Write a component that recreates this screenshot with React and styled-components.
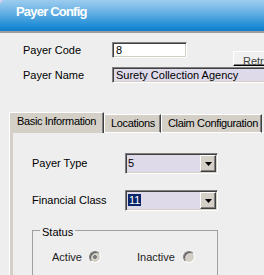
import React from "react";
import styled, { createGlobalStyle } from "styled-components";

const GlobalStyle = createGlobalStyle`
  html, body {
    margin: 0;
    padding: 0;
    background: #eeeeee;
    overflow: hidden;
  }
  body {
    font-family: "Liberation Sans", Arial, sans-serif;
    font-size: 11px;
    color: #000;
  }
`;

const Window = styled.div`
  width: 264px;
  height: 275px;
  overflow: hidden;
  background: #eeeeee;
`;

const TitleFrame = styled.div`
  background: #d6d0f0;
`;

const TitleBar = styled.div`
  box-sizing: border-box;
  height: 33px;
  padding: 4px 0 0 16px;
  border-top-left-radius: 5px;
  border-bottom: 2px solid #9c9c9c;
  background: linear-gradient(
    to bottom,
    #9dcdef 0%,
    #74b8e7 30%,
    #45a0dd 60%,
    #1f8bd4 85%,
    #0f7dcb 100%
  );
`;

const Title = styled.div`
  color: #fff;
  font-weight: bold;
  font-size: 13px;
  line-height: 16px;
  letter-spacing: -0.8px;
`;

const HeaderForm = styled.div`
  display: grid;
  grid-template-columns: 89px 75px 1fr;
  grid-template-rows: 16px 16px;
  row-gap: 9px;
  padding: 9px 0 0 23px;
`;

const Label = styled.div`
  line-height: ${(p) => p.$lh || 16}px;
  white-space: nowrap;
`;

const TextInput = styled.div`
  box-sizing: border-box;
  height: 16px;
  width: ${(p) => p.$w}px;
  padding: 0 3px;
  line-height: 14px;
  white-space: nowrap;
  overflow: hidden;
  background: ${(p) => (p.$lilac ? "#dedaea" : "#ffffff")};
  border: 1px solid;
  border-color: #808080 #ffffff #ffffff #808080;
  box-shadow: inset 1px 1px #404040, inset -1px -1px #d4d0c8;
`;

const WideInput = styled(TextInput)`
  grid-column: 2 / span 2;
`;

const RetrieveButton = styled.div`
  box-sizing: border-box;
  margin: 9px 0 0 46px;
  width: 70px;
  height: 15px;
  padding: 3px 0 0 9px;
  line-height: 13px;
  overflow: hidden;
  white-space: nowrap;
  color: #404040;
  background: #f0f0f0;
  border: 1px solid;
  border-color: #ffffff #404040 #000000 #ffffff;
  box-shadow: inset 0 -1px #808080;
`;

const Tabs = styled.div`
  margin: 29px 0 0 9px;
`;

const TabStrip = styled.div`
  display: flex;
  align-items: flex-end;
  height: 21px;
`;

const Tab = styled.div`
  box-sizing: border-box;
  width: ${(p) => p.$w}px;
  height: ${(p) => (p.$active ? 21 : 19)}px;
  padding-left: ${(p) => (p.$active ? 7 : 6)}px;
  line-height: 16px;
  letter-spacing: -0.35px;
  white-space: nowrap;
  overflow: hidden;
  background: #d4d0c8;
  border-top: 1px solid #ffffff;
  border-left: 1px solid #ffffff;
  border-right: 1px solid #404040;
  border-bottom: ${(p) => (p.$active ? "none" : "1px solid #ffffff")};
  box-shadow: inset -1px 0 #808080;
`;

const StripRest = styled.div`
  flex: 1;
  height: 0;
  border-bottom: 1px solid #ffffff;
`;

const Panel = styled.div`
  height: 142px;
  padding: 20px 0 0 22px;
  box-sizing: border-box;
  border-left: 1px solid #ffffff;
  box-shadow: inset 3px 0 #d4d0c8;
`;

const FieldGrid = styled.div`
  display: grid;
  grid-template-columns: 93px 93px;
  grid-template-rows: 21px 21px;
  row-gap: 16px;
`;

const Select = styled.div`
  box-sizing: border-box;
  display: flex;
  align-items: stretch;
  height: 21px;
  background: #dedaea;
  border: 1px solid;
  border-color: #808080 #ffffff #ffffff #808080;
  box-shadow: inset 1px 1px #404040, inset -1px -1px #d4d0c8;
`;

const SelectValue = styled.div`
  flex: 1;
  padding: 1px 0 0 2px;
  line-height: 16px;
`;

const Highlight = styled.span`
  background: #0a246a;
  color: #ffffff;
  padding: 0 1px;
`;

const DropButton = styled.div`
  box-sizing: border-box;
  width: 16px;
  margin: 1px 1px 1px 0;
  display: flex;
  align-items: center;
  justify-content: center;
  background: #d4d0c8;
  border: 1px solid;
  border-color: #ffffff #404040 #404040 #ffffff;
  box-shadow: inset -1px -1px #808080;
`;

const GroupBox = styled.div`
  width: 186px;
  height: 60px;
  box-sizing: border-box;
  margin-top: 19px;
  border: 1px solid #a0a0a0;
`;

const Legend = styled.div`
  width: fit-content;
  margin: -5px 0 0 7px;
  padding: 0 2px;
  line-height: 13px;
  background: #eeeeee;
`;

const RadioRow = styled.div`
  display: flex;
  align-items: center;
  height: 16px;
  margin-top: 10px;
  padding-left: 19px;
  color: #222;
`;

const RadioLabel = styled.span`
  line-height: 16px;
  margin-right: ${(p) => p.$gap}px;
`;

const Radio = styled.span`
  box-sizing: border-box;
  width: 12px;
  height: 12px;
  border-radius: 50%;
  margin-right: ${(p) => p.$after || 0}px;
  border: 1px solid;
  border-color: #808080 #ffffff #ffffff #808080;
  background: ${(p) =>
    p.$checked
      ? "radial-gradient(circle, #7c7c7c 0 1.6px, #d4d0c8 2.2px)"
      : "#d4d0c8"};
  box-shadow: inset 1px 1px #5a5a5a;
`;

const Arrow = () => (
  <svg width="7" height="4" viewBox="0 0 7 4">
    <polygon points="0,0 7,0 3.5,4" fill="#000" />
  </svg>
);

const ComboBox = ({ children }) => (
  <Select>
    <SelectValue>{children}</SelectValue>
    <DropButton>
      <Arrow />
    </DropButton>
  </Select>
);

export default function App() {
  return (
    <>
      <GlobalStyle />
      <Window>
        <TitleFrame>
          <TitleBar>
            <Title>Payer Config</Title>
          </TitleBar>
        </TitleFrame>

        <HeaderForm>
          <Label>Payer Code</Label>
          <TextInput $w={75}>8</TextInput>
          <RetrieveButton>Retrieve</RetrieveButton>
          <Label>Payer Name</Label>
          <WideInput $w={170} $lilac>
            Surety Collection Agency
          </WideInput>
        </HeaderForm>

        <Tabs>
          <TabStrip>
            <Tab $w={95} $active>
              Basic Information
            </Tab>
            <Tab $w={57}>Locations</Tab>
            <Tab $w={101}>Claim Configuration</Tab>
            <StripRest />
          </TabStrip>
          <Panel>
            <FieldGrid>
              <Label $lh={21}>Payer Type</Label>
              <ComboBox>5</ComboBox>
              <Label $lh={21}>Financial Class</Label>
              <ComboBox>
                <Highlight>11</Highlight>
              </ComboBox>
            </FieldGrid>
            <GroupBox>
              <Legend>Status</Legend>
              <RadioRow>
                <RadioLabel $gap={7}>Active</RadioLabel>
                <Radio $checked $after={36} />
                <RadioLabel $gap={8}>Inactive</RadioLabel>
                <Radio />
              </RadioRow>
            </GroupBox>
          </Panel>
        </Tabs>
      </Window>
    </>
  );
}
